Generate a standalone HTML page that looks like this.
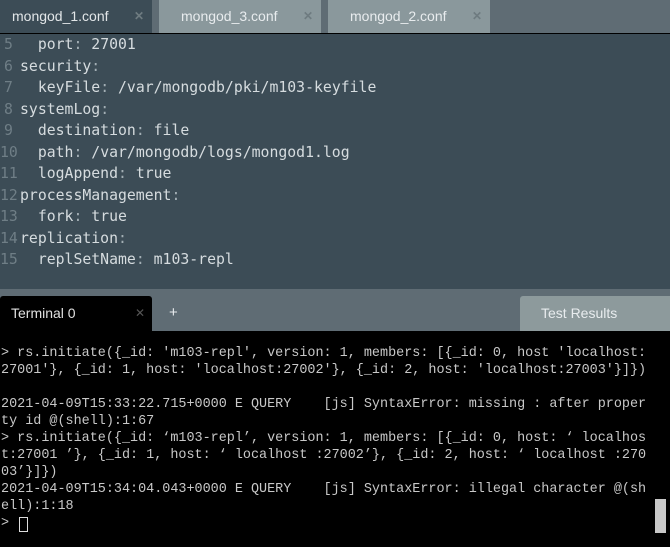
<!DOCTYPE html>
<html><head><style>
*{margin:0;padding:0;box-sizing:border-box}
body{width:670px;height:547px;overflow:hidden;background:#000;position:relative;font-family:"Liberation Sans",sans-serif}
.tabbar{position:absolute;left:0;top:0;width:670px;height:33px;background:#5f6c74}
.tab{position:absolute;top:0;height:33px;font-size:14px;line-height:33px;padding-left:12px}
.tab .x{position:absolute;right:8px;top:0;font-size:12px;font-weight:bold;color:#6e7b80}
.editor{position:absolute;left:0;top:33px;width:670px;height:256px;background:#3c4c56;font-family:"DejaVu Sans Mono",monospace;font-size:14.8px;color:#d6dcdf}
.ln{position:absolute;left:0;height:21.5px;line-height:21.5px;white-space:pre}
.ln .n{display:inline-block;width:15px;color:#6f7e86;text-align:left;padding-left:4px}
.ln .c{position:absolute;left:20px;top:0}
.p{color:#a3afb5}
.strip{position:absolute;left:0;top:289px;width:670px;height:42px;background:#5f6c74}
.term{position:absolute;left:0;top:331px;width:670px;height:216px;background:#000;font-family:"Liberation Mono",monospace;font-size:13.45px;color:#c8c8c8}
.tl{position:absolute;left:1px;white-space:pre;line-height:17px;height:17px}
</style></head><body>
<div class="tabbar">
 <div class="tab" style="left:0;width:152px;background:#3c4c56;color:#e2e6e8">mongod_1.conf<span class="x" style="right:8px">✕</span></div>
 <div class="tab" style="left:159px;width:162px;background:#8a989c;color:#e8ecee;padding-left:22px">mongod_3.conf<span class="x">✕</span></div>
 <div class="tab" style="left:328px;width:162px;background:#8a989c;color:#e8ecee;padding-left:22px">mongod_2.conf<span class="x">✕</span></div>
</div>
<div class="editor" style="top:34px">
 <div class="ln" style="top:0"><span class="n">5</span><span class="c">  port<span class="p">:</span> 27001</span></div>
 <div class="ln" style="top:21.5px"><span class="n">6</span><span class="c">security<span class="p">:</span></span></div>
 <div class="ln" style="top:43px"><span class="n">7</span><span class="c">  keyFile<span class="p">:</span> /var/mongodb/pki/m103-keyfile</span></div>
 <div class="ln" style="top:64.5px"><span class="n">8</span><span class="c">systemLog<span class="p">:</span></span></div>
 <div class="ln" style="top:86px"><span class="n">9</span><span class="c">  destination<span class="p">:</span> file</span></div>
 <div class="ln" style="top:107.5px"><span class="n" style="padding-left:0">10</span><span class="c">  path<span class="p">:</span> /var/mongodb/logs/mongod1.log</span></div>
 <div class="ln" style="top:129px"><span class="n" style="padding-left:0">11</span><span class="c">  logAppend<span class="p">:</span> true</span></div>
 <div class="ln" style="top:150.5px"><span class="n" style="padding-left:0">12</span><span class="c">processManagement<span class="p">:</span></span></div>
 <div class="ln" style="top:172px"><span class="n" style="padding-left:0">13</span><span class="c">  fork<span class="p">:</span> true</span></div>
 <div class="ln" style="top:193.5px"><span class="n" style="padding-left:0">14</span><span class="c">replication<span class="p">:</span></span></div>
 <div class="ln" style="top:215px"><span class="n" style="padding-left:0">15</span><span class="c">  replSetName<span class="p">:</span> m103-repl</span></div>
</div>
<div class="strip">
 <div style="position:absolute;left:0;top:7px;width:152px;height:35px;background:#000;border-radius:3px 3px 0 0;color:#e0e0e0;font-size:14px;line-height:34px;padding-left:11px">Terminal 0<span style="position:absolute;right:7px;font-size:12px;color:#555">✕</span></div>
 <div style="position:absolute;left:169px;top:7px;color:#e8ecee;font-size:15px;line-height:34px">+</div>
 <div style="position:absolute;left:520px;top:7px;width:150px;height:35px;background:#8d9a9c;border-radius:3px 0 0 0;color:#e8ecee;font-size:14px;line-height:34px;padding-left:21px">Test Results</div>
</div>
<div class="term">
 <div class="tl" style="top:14px">&gt; rs.initiate({_id: 'm103-repl', version: 1, members: [{_id: 0, host 'localhost:</div>
 <div class="tl" style="top:31px">27001'}, {_id: 1, host: 'localhost:27002'}, {_id: 2, host: 'localhost:27003'}]})</div>
 <div class="tl" style="top:65px">2021-04-09T15:33:22.715+0000 E QUERY    [js] SyntaxError: missing : after proper</div>
 <div class="tl" style="top:82px">ty id @(shell):1:67</div>
 <div class="tl" style="top:99px">&gt; rs.initiate({_id: ‘m103-repl’, version: 1, members: [{_id: 0, host: ‘ localhos</div>
 <div class="tl" style="top:116px">t:27001 ’}, {_id: 1, host: ‘ localhost :27002’}, {_id: 2, host: ‘ localhost :270</div>
 <div class="tl" style="top:133px">03’}]})</div>
 <div class="tl" style="top:150px">2021-04-09T15:34:04.043+0000 E QUERY    [js] SyntaxError: illegal character @(sh</div>
 <div class="tl" style="top:167px">ell):1:18</div>
 <div class="tl" style="top:184px">&gt; </div>
 <div style="position:absolute;left:19px;top:186px;width:9px;height:15px;border:1px solid #ddd"></div>
 <div style="position:absolute;left:655px;top:168px;width:11px;height:34px;background:#c8c8c8"></div>
</div>
</body></html>
